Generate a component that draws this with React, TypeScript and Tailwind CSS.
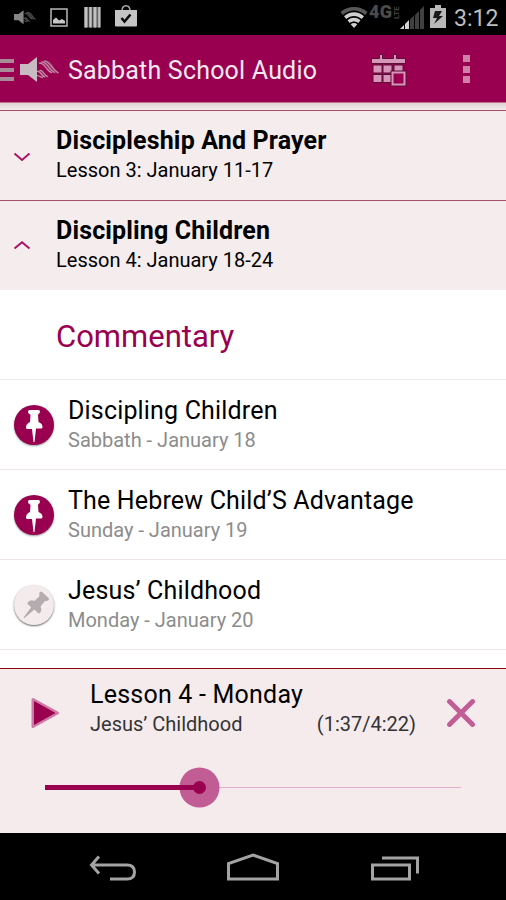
import React from "react";

const lessons = [
  { title: "Discipleship And Prayer", detail: "Lesson 3: January 11-17", open: false },
  { title: "Discipling Children", detail: "Lesson 4: January 18-24", open: true },
];

const tracks = [
  { title: "Discipling Children", day: "Sabbath - January 18", pinned: true },
  { title: "The Hebrew Child’S Advantage", day: "Sunday - January 19", pinned: true },
  { title: "Jesus’ Childhood", day: "Monday - January 20", pinned: false },
];

function Speaker({ className, fill, wing }: { className: string; fill: string; wing: string }) {
  return (
    <svg className={className} viewBox="0 0 39 26">
      <path d="M0 7h8l9-7v25l-9-7H0z" fill={fill} />
      <path d="M19 6c3-3 9-4 13 1 2 3 3 7 7 9-5 1-9 0-12-4-2-3-4-6-8-6zM17 14.500c2-2 5-2 7 1 1 2 2 3 5 4-3 2-6 1-8-1-1-2-2-3-4-4z" fill={wing} opacity=".3" />
      <path d="M19 6.200c6-1 7 8 13 9.500M21.500 5c6-1 7 8 13 10.500M24 4c6-1 7 8 14.500 12M17 14.500c4-1 4 4.500 8 5.500M19.500 13.500c4-1 4 5 8.500 6M17 18.500c2 0 3 2 6 2" fill="none" stroke={wing} strokeWidth="1.100" />
    </svg>
  );
}

function StatusBar() {
  return (
    <div className="flex h-[35px] shrink-0 items-start justify-between bg-black">
      <div className="flex pl-[14px] pt-[4px]">
        <Speaker className="mt-[6px] h-[15px] w-[22px]" fill="#858585" wing="#777" />
        <svg className="ml-[14px] mt-[4px] h-[19px] w-[18px]" viewBox="0 0 18 19">
          <rect x="1" y="1" width="16" height="17" fill="none" stroke="#b8b8b8" strokeWidth="1.500" />
          <path d="M3 15.500v-3.500l3-2.500 3 3 3-1.500 3 2v2.500z" fill="#c8c8c8" />
        </svg>
        <svg className="ml-[16px] mt-[3px] h-[21px] w-[17px]" viewBox="0 0 17 21">
          <path d="M0 0h4v20.500H0zM4.500 0h4v20.500h-4zM9 0h4v20.500H9zM13.300 0h3.500v20.500h-3.500z" fill="#8d8d8d" />
          <path d="M1 0h2v20.500H1zM5.500 0h2v20.500h-2zM10 0h2v20.500h-2zM14.500 0h1.500v20.500h-1.500z" fill="#c2c2c2" />
        </svg>
        <svg className="ml-[14px] h-[23px] w-[22px]" viewBox="0 0 22 23">
          <path d="M7 7C7 0 15 0 15 7" fill="none" stroke="#aaa" strokeWidth="1.500" />
          <path d="M0 6h22v15.500q0 1-1 1H1q-1 0-1-1z" fill="#c4c4c4" />
          <path d="M6.500 14l3 3.500 6-7" fill="none" stroke="#080808" strokeWidth="2.500" />
        </svg>
      </div>
      <div className="flex pr-[9px] pt-[4px]">
        <svg className="mt-[2px] h-[22px] w-[28px]" viewBox="0 0 28 22">
          <path d="M.5 6C8-.6 20-.6 27.500 6l-2.300 3C18 3 10 3 2.800 9z" fill="#595959" />
          <path d="M4 10.200C10 5 18 5 24 10.200L21.700 13C17 9 11 9 6.300 13zM7.500 14.300c4-3.300 9-3.300 13 0L18.300 17c-2.600-2-6-2-8.600 0zM10.700 18.200c2-1.600 4.600-1.600 6.600 0L14 22z" fill="#d0d0d0" />
        </svg>
        <div className="flex h-[16px] w-[32px] text-[#4b4b4b]">
          <span className="ml-px block w-[24px] text-[18px] font-black leading-[16px] tracking-[0.4px]">4G</span>
          <span className="block h-[15px] w-[7px] rotate-180 whitespace-nowrap text-[8px] font-medium leading-[7px] [writing-mode:vertical-rl]">LTE</span>
        </div>
        <svg className="mt-[2px] h-[23px] w-[24px]" viewBox="0 0 24 23">
          <path d="M10 23V13.500l4-4V23zM15 23V9l4-4v18zM20 23V4l4-4v23z" fill="#404040" />
          <path d="M0 23l4-4v4zM5 23v-5l4-4v9z" fill="#d2d2d2" />
        </svg>
        <svg className="ml-[6px] mt-[1px] h-[23px] w-[16px]" viewBox="0 0 16 23">
          <path d="M5 0h6v3h5v20H0V3h5z" fill="#b8b8b8" />
          <path d="M5 6h7l-3 5h4L4 19l3-6H3z" fill="#181818" />
        </svg>
        <span className="ml-[8px] mt-[1px] block w-[43px] whitespace-nowrap text-[23px] leading-[28px] text-[#bebebe]">3:12</span>
      </div>
    </div>
  );
}

function AppBar() {
  return (
    <header className="flex h-[68px] shrink-0 border-b border-[#c4738f] bg-[#99004f] shadow-[0_1px_3px_#0005]">
      <div className="mt-[24px] flex h-[22px] w-[14px] flex-col justify-between">
        <i className="h-[4px] bg-[#a78b98]" />
        <i className="h-[4px] bg-[#a78b98]" />
        <i className="h-[4px] bg-[#a78b98]" />
      </div>
      <Speaker className="ml-[6px] mt-[22px] h-[26px] w-[39px]" fill="#c7bcc2" wing="#c597ae" />
      <h1 className="ml-[9px] mt-[21px] w-[260px] whitespace-nowrap text-[25px] leading-[30px] tracking-[0.2px] text-[#f4e9ef]">Sabbath School Audio</h1>
      <svg className="ml-[42px] mt-[18px] h-[34px] w-[37px]" viewBox="0 0 37 34">
        <g fill="#d795b9" stroke="#5b1038" strokeWidth="1">
          <path d="M1.500 5.500h8v-4h3v4h11v-4h3v4h9v5h-34z" />
          <path d="M3 12h9v8H3zM13 12h9v8h-9zM24 12h9v8h-9zM3 21.500h9v8H3zM13 21.500h9v8h-9z" />
        </g>
        <rect x="22.500" y="19.500" width="12" height="12" fill="#99004f" stroke="#5b1038" strokeWidth="4" />
        <rect x="22.500" y="19.500" width="12" height="12" fill="#99004f" stroke="#d795b9" strokeWidth="2" />
      </svg>
      <div className="ml-[56px] mt-[20px] flex h-[28px] w-[7px] flex-col justify-between">
        <i className="h-[7px] bg-[#d180a7]" />
        <i className="h-[7px] bg-[#d180a7]" />
        <i className="h-[7px] bg-[#d180a7]" />
      </div>
    </header>
  );
}

function PinBadge({ pinned }: { pinned: boolean }) {
  return (
    <div className={pinned
      ? "ml-[14px] mt-[25px] h-[40px] w-[40px] shrink-0 rounded-full bg-[#99004f] shadow-[0_1px_2px_#0006]"
      : "ml-[14px] mt-[25px] h-[40px] w-[40px] shrink-0 rounded-full bg-[#f4ebed] shadow-[0_1px_2px_#0009]"}>
      <svg className="h-[40px] w-[40px]" viewBox="0 0 40 40">
        <path
          transform={pinned ? undefined : "translate(1 1) rotate(43 20 20) translate(.4 0) scale(.98)"}
          d="M15.500 5h9q1.500 0 1.500 1.500T24.500 9L24 10l.5 7q4 1.500 4 5 0 1.500-1.500 1.500h-5L20.500 37h-1L18 24h-4.500q-1.500 0-1.500-1.500 0-4 4-5.500l.5-7-1-1Q14 8.500 14 6.800T15.500 5z"
          fill={pinned ? "#fff" : "#b3adaf"}
        />
      </svg>
    </div>
  );
}

function Player() {
  return (
    <section className="flex h-[165px] shrink-0 flex-col border-t border-[#8b0010] bg-[#f5ebed]">
      <div className="flex h-[98px]">
        <svg className="ml-[31px] mt-[28px] h-[32px] w-[29px]" viewBox="0 0 29 32">
          <path d="M2 2.500L26.500 16 2 29.500z" fill="#99004f" stroke="#cf79a5" strokeWidth="3" strokeLinejoin="round" />
          <path d="M3 4L24.500 16 3 28z" fill="#99004f" />
        </svg>
        <div className="ml-[30px] w-[326px] whitespace-nowrap pt-[11px]">
          <div className="text-[25px] leading-[30px] tracking-[0.22px] text-black">Lesson 4 - Monday</div>
          <div className="mt-[2px] flex justify-between text-[20px] leading-[24px] text-[#333]">
            <span>Jesus’ Childhood</span>
            <span>(1:37/4:22)</span>
          </div>
        </div>
        <svg className="ml-[31px] mt-[30px] h-[28px] w-[28px]" viewBox="0 0 28 28">
          <path d="M2.500 2.500l23 23M25.500 2.500l-23 23" stroke="#c15c94" strokeWidth="4.800" strokeLinecap="round" />
        </svg>
      </div>
      <svg className="ml-[45px] h-[42px] w-[416px]" viewBox="0 0 416 42">
        <path d="M155 20.500h261" stroke="#e1b0c9" strokeWidth="1" />
        <circle cx="154.500" cy="20.500" r="20" fill="#c15c94" />
        <path d="M0 20.500h154" stroke="#99004f" strokeWidth="5" />
        <circle cx="154.500" cy="20.500" r="6.500" fill="#99004f" />
      </svg>
    </section>
  );
}

export default function App() {
  return (
    <div className="flex h-[900px] w-[506px] flex-col overflow-hidden bg-white font-[Roboto,sans-serif]">
      <StatusBar />
      <AppBar />
      <div className="h-[7px] shrink-0 bg-gradient-to-b from-[#ddd3d5] to-[#f5eced]" />
      {lessons.map((l) => (
        <div key={l.title} className="flex h-[90px] shrink-0 border-t border-[#a35068] bg-[#f5eced]">
          <svg className="ml-[13px] mt-[40px] h-[10px] w-[18px]" viewBox="0 0 18 10">
            <path d={l.open ? "M1.500 7.500L9 1.200l7.500 6.300" : "M1.500 2.500L9 9 16.500 2.500"} fill="none" stroke="#ad1163" strokeWidth="1.900" />
          </svg>
          <div className="ml-[25px] whitespace-nowrap pt-[16px] text-black">
            <div className="text-[25px] font-bold leading-[28px] tracking-[0.15px]">{l.title}</div>
            <div className="mt-[3px] text-[20px] leading-[24px]">{l.detail}</div>
          </div>
        </div>
      ))}
      <h2 className="h-[90px] shrink-0 border-b border-[#f0e9eb] pl-[56px] pt-[29px] text-[31px] leading-[36px] text-[#99004f]">Commentary</h2>
      {tracks.map((t) => (
        <div key={t.title} className="flex h-[90px] shrink-0 border-b border-[#f1e5e8]">
          <PinBadge pinned={t.pinned} />
          <div className="ml-[14px] whitespace-nowrap pt-[16px]">
            <div className="text-[25px] leading-[30px] tracking-[0.17px] text-black">{t.title}</div>
            <div className="mt-[2px] text-[20px] leading-[24px] text-[#8c8c8c]">{t.day}</div>
          </div>
        </div>
      ))}
      <div className="h-[18px] shrink-0 bg-white" />
      <Player />
      <nav className="flex h-[67px] shrink-0 bg-black">
        <svg className="h-[67px] w-[506px]" viewBox="0 0 506 67" fill="none" stroke="#a3a3a3" strokeWidth="3">
          <path d="M99 23.500l-7.500 8.500 7.500 8.500M92 32h35q7.500 0 7.500 7T127 46h-17" />
          <path d="M228.500 46V30.500L253 22l24.500 8.500V46z" />
          <path d="M372.500 32h37v14h-37zM382 25h35.500v15.500" />
        </svg>
      </nav>
    </div>
  );
}
